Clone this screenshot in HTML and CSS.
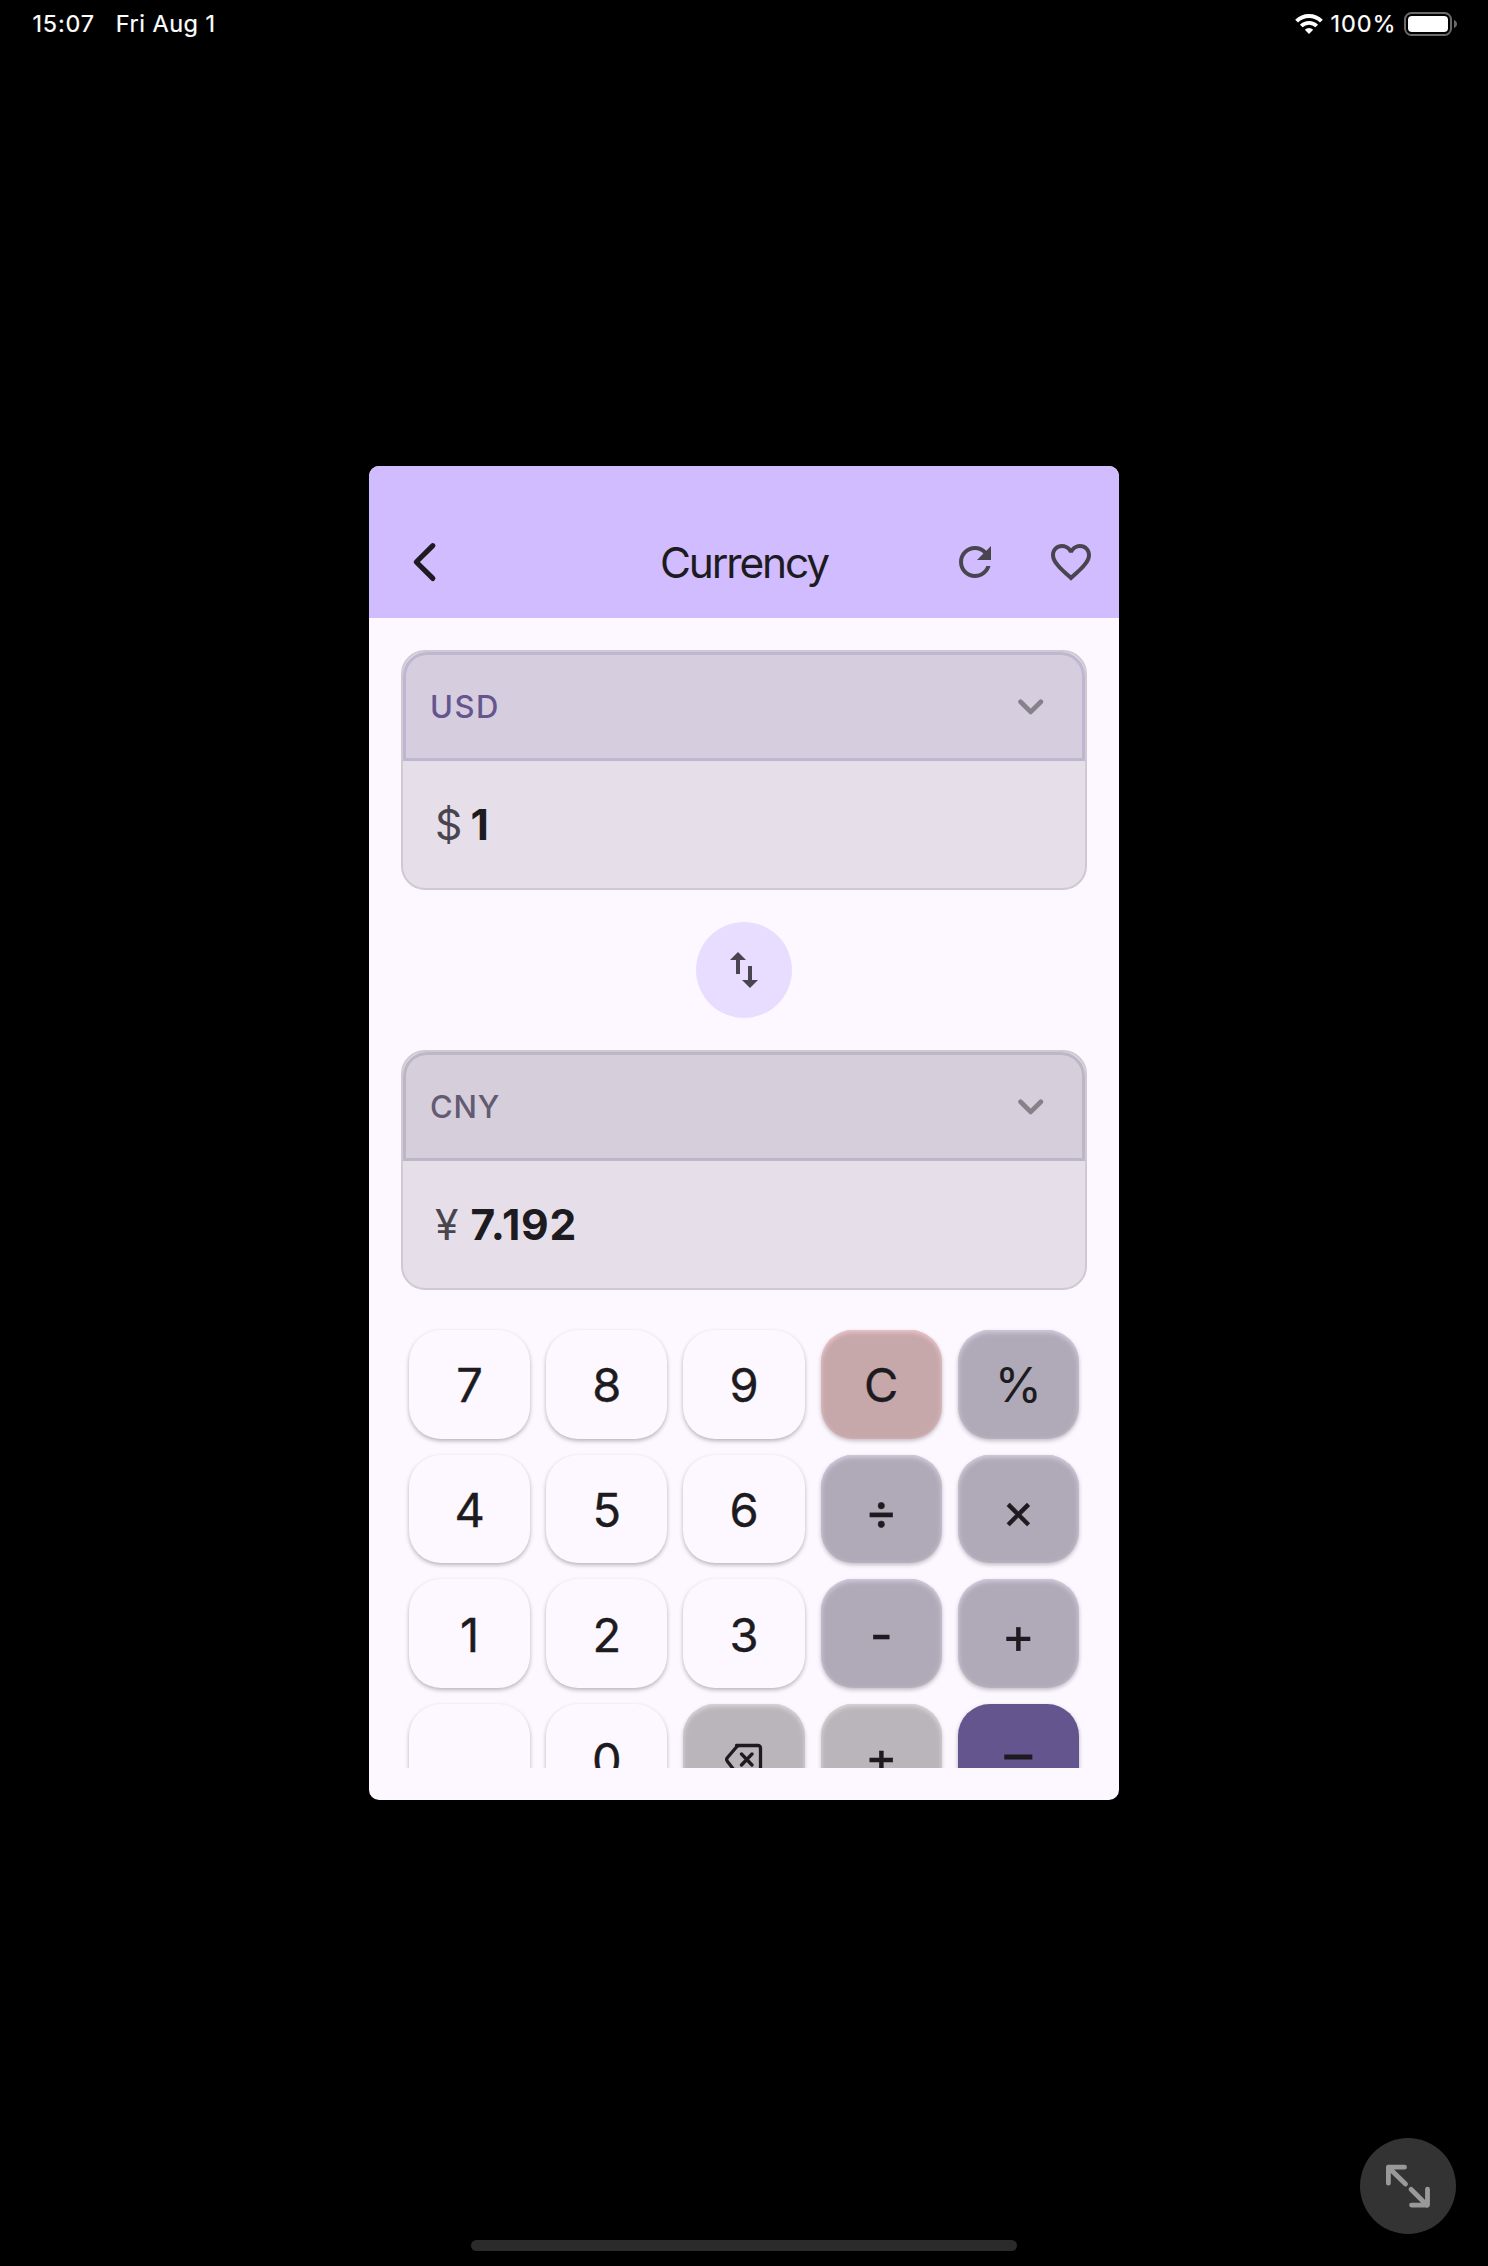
FILE: index.html
```html
<!DOCTYPE html>
<html lang="en">
<head>
<meta charset="utf-8">
<title>Currency</title>
<link rel="stylesheet" href="styles.css">
</head>
<body>
<div class="screen">
  <header class="status">
    <span class="time">15:07</span>
    <span class="date">Fri Aug 1</span>
    <svg class="wifi" width="28" height="20" viewBox="0 0 28 20">
      <path d="M1.6 7.2a17.6 17.6 0 0 1 24.8 0" fill="none" stroke="#fff" stroke-width="4"/>
      <path d="M6.3 12a11 11 0 0 1 15.4 0" fill="none" stroke="#fff" stroke-width="3.8"/>
      <path d="M14 20l-4.2-4.3a6 6 0 0 1 8.4 0z" fill="#fff"/>
    </svg>
    <span class="percent">100%</span>
    <svg class="battery" width="54" height="24" viewBox="0 0 54 24">
      <rect x="1" y="1" width="46" height="22" rx="6.5" fill="none" stroke="#6a6a6a" stroke-width="2"/>
      <rect x="4" y="4" width="40" height="16" rx="4" fill="#fff"/>
      <path d="M50 8c4 1.500 4 6.500 0 8z" fill="#6a6a6a"/>
    </svg>
  </header>

  <main class="app">
    <div class="bar">
      <svg class="back" width="48" height="48" viewBox="0 0 48 48"><path d="M32.800 7.700L16.300 24l16.500 16.400" fill="none" stroke="#1d1b20" stroke-width="5.200" stroke-linecap="round" stroke-linejoin="round"/></svg>
      <h1 class="title">Currency</h1>
      <div class="actions">
        <svg width="48" height="48" viewBox="0 0 24 24"><path fill="#49454f" d="M17.650 6.350C16.200 4.900 14.210 4 12 4c-4.420 0-7.990 3.580-7.990 8s3.570 8 7.990 8c3.730 0 6.840-2.550 7.730-6h-2.080c-.82 2.330-3.040 4-5.650 4-3.310 0-6-2.690-6-6s2.690-6 6-6c1.660 0 3.140.69 4.220 1.780L13 11h7V4l-2.350 2.350z"/></svg>
        <svg width="48" height="48" viewBox="0 0 24 24"><path fill="#49454f" d="M16.500 3c-1.740 0-3.410.81-4.500 2.090C10.910 3.810 9.240 3 7.500 3 4.420 3 2 5.420 2 8.500c0 3.780 3.400 6.860 8.550 11.540L12 21.350l1.450-1.320C18.600 15.360 22 12.280 22 8.500 22 5.420 19.580 3 16.500 3zm-4.400 15.550l-.1.100-.1-.1C7.140 14.240 4 11.390 4 8.500 4 6.500 5.500 5 7.500 5c1.540 0 3.040.99 3.570 2.360h1.870C13.460 5.990 14.960 5 16.500 5c2 0 3.500 1.500 3.500 3.500 0 2.890-3.140 5.740-7.900 10.050z"/></svg>
      </div>
    </div>

    <div class="content">
      <section class="card card-from">
        <div class="select"><span class="code">USD</span>
          <svg width="28" height="18" viewBox="0 0 28 18"><path d="M3.500 3.800L13.700 13.900l10.200-10.100" fill="none" stroke="#87828a" stroke-width="4.800" stroke-linecap="round" stroke-linejoin="round"/></svg>
        </div>
        <div class="value"><span class="symbol">$</span><span class="amount">1</span></div>
      </section>

      <button class="swap" aria-label="Swap">
        <svg width="48" height="48" viewBox="0 0 24 24"><path fill="#49454f" d="M16 17.010V10h-2v7.010h-3L15 21l4-3.990h-3zM9 3L5 6.990h3V14h2V6.990h3L9 3z"/></svg>
      </button>

      <section class="card card-to">
        <div class="select"><span class="code">CNY</span>
          <svg width="28" height="18" viewBox="0 0 28 18"><path d="M3.500 3.800L13.700 13.900l10.200-10.100" fill="none" stroke="#87828a" stroke-width="4.800" stroke-linecap="round" stroke-linejoin="round"/></svg>
        </div>
        <div class="value"><span class="symbol">¥</span><span class="amount">7.192</span></div>
      </section>

      <div class="keypad">
        <div class="key">7</div><div class="key">8</div><div class="key">9</div><div class="key clear">C</div><div class="key op percent-key">%</div>
        <div class="key">4</div><div class="key">5</div><div class="key">6</div><div class="key op sign">÷</div><div class="key op sign">×</div>
        <div class="key">1</div><div class="key">2</div><div class="key">3</div><div class="key op sign">-</div><div class="key op sign">+</div>
        <div class="key"></div><div class="key">0</div>
        <div class="key util backspace">
          <svg width="40" height="34" viewBox="0 0 40 34"><path d="M12.500 2.500H34a2.500 2.500 0 0 1 2.500 2.500v23a2.500 2.500 0 0 1-2.500 2.500H14.500q-1.500 0-2.500-1L3.300 18.200q-1.300-1.700 0-3.400L12.500 4q1.200-1.500 3-1.500M17.500 11l10.500 11M28 11L17.500 22" fill="none" stroke="#1d1b20" stroke-width="3.300" stroke-linecap="round" stroke-linejoin="round"/></svg>
        </div>
        <div class="key util sign">±</div><div class="key equals">=</div>
      </div>
    </div>
  </main>

  <button class="expand" aria-label="Expand">
    <svg width="48" height="48" viewBox="0 0 48 48"><path d="M21.500 21.800L4.400 5M20.500 5H4.400v16M27 27L43 43M27.500 42.900h16V27" transform="translate(0 .2)" fill="none" stroke="#999" stroke-width="4.800" stroke-linecap="round" stroke-linejoin="round"/></svg>
  </button>
  <div class="home"></div>
</div>
</body>
</html>
```
FILE: styles.css
```css
* { box-sizing: border-box; }

body {
  margin: 0;
  background: #000;
  font-family: Inter, "Liberation Sans", sans-serif;
  color: #1d1b20;
}

svg { display: block; flex: none; }

button { border: 0; padding: 0; }

.screen {
  position: relative;
  width: 1488px;
  height: 2266px;
  background: #000;
  overflow: hidden;
}

.status {
  display: flex;
  align-items: center;
  height: 48px;
  padding: 0 30px 0 32.5px;
  color: #fff;
  font-size: 23.5px;
  font-weight: 400;
  line-height: 28px;
  letter-spacing: 0.8px;
  -webkit-text-stroke: 0.2px #fff;
}

.date { margin-left: 21px; letter-spacing: 0.5px; }
.wifi { margin-left: auto; }
.percent { margin: 0 7.5px 0 8px; letter-spacing: 0.9px; }

.app {
  display: flex;
  flex-direction: column;
  width: 750px;
  height: 1334px;
  margin: 418px auto 0;
  border-radius: 10px;
  background: #fdf7ff;
  overflow: hidden;
}

.bar {
  display: grid;
  grid-template-columns: 1fr auto 1fr;
  align-items: center;
  height: 152px;
  padding: 40px 24px 0;
  background: #d0bcfe;
}

.back { margin-left: 7px; }

.title {
  margin: 2px 0 0;
  font-size: 42.4px;
  font-weight: 400;
  line-height: 52px;
  letter-spacing: -2.1px;
}

.actions { display: flex; justify-content: flex-end; gap: 48px; }

.content {
  display: flex;
  flex-direction: column;
  height: 1182px;
  padding: 32px;
}

.card {
  flex: none;
  height: 240px;
  border: 2px solid #cfc9d3;
  border-radius: 24px;
  background: #e6dfea;
}

.select {
  display: flex;
  align-items: center;
  justify-content: space-between;
  height: 109px;
  padding: 0 37px 0 24px;
  border: 3px solid #bfb6d0;
  border-radius: 24px 24px 0 0;
  background: #d6cdde;
}

.code {
  font-size: 31px;
  font-weight: 500;
  letter-spacing: 1.5px;
  color: #65558f;
}

.card-to .select { border-color: #bdb6c6; background: #d6cedb; }
.card-to .code { color: #625b71; letter-spacing: 0.8px; }

.value {
  display: flex;
  align-items: center;
  height: 127px;
  padding: 0 32px;
  font-size: 42.6px;
}

.symbol { width: 35.5px; color: #49454f; }
.amount { font-weight: 700; letter-spacing: 0.8px; }

.swap {
  display: grid;
  place-items: center;
  flex: none;
  align-self: center;
  width: 96px;
  height: 96px;
  margin: 32px 0;
  border-radius: 50%;
  background: #e8ddff;
}

.keypad {
  display: grid;
  grid-template-columns: repeat(5, 1fr);
  grid-auto-rows: 108.73px;
  gap: 16px;
  height: 446px;
  margin-top: 32px;
  padding: 8px 8px 0;
  overflow: hidden;
}

.key {
  display: flex;
  align-items: center;
  justify-content: center;
  padding-top: 1px;
  border-radius: 32px;
  background: #fdf8ff;
  box-shadow: 0 2px 4px rgba(0, 0, 0, 0.28);
  font-size: 47px;
  font-weight: 400;
  -webkit-text-stroke: 0.4px #1d1b20;
}

.op { background: #b0aab8; box-shadow: 0 2px 4px rgba(0, 0, 0, 0.23), inset 0 2px 5px #d8d0e4; }
.clear { background: #c6a7aa; box-shadow: 0 2px 4px rgba(0, 0, 0, 0.23), inset 0 2px 5px #f1cacd; }
.util { background: #bab5ba; box-shadow: 0 2px 4px rgba(0, 0, 0, 0.2), inset 0 2px 5px #dedade; }
.sign { padding-top: 3px; font-size: 50px; }
.percent-key { font-size: 48px; -webkit-text-stroke-width: 0; }
.backspace { padding-top: 3px; }

.equals {
  padding-top: 8px;
  background: #65558f;
  font-family: "Liberation Sans", sans-serif;
  font-size: 56px;
  -webkit-text-stroke-width: 0.8px;
}

.expand {
  position: absolute;
  left: 1360px;
  top: 2138px;
  display: grid;
  place-items: center;
  width: 96px;
  height: 96px;
  border-radius: 50%;
  background: #333;
}

.home {
  position: absolute;
  left: 471px;
  top: 2240px;
  width: 546px;
  height: 11px;
  border-radius: 6px;
  background: #2b2b2b;
}
```
